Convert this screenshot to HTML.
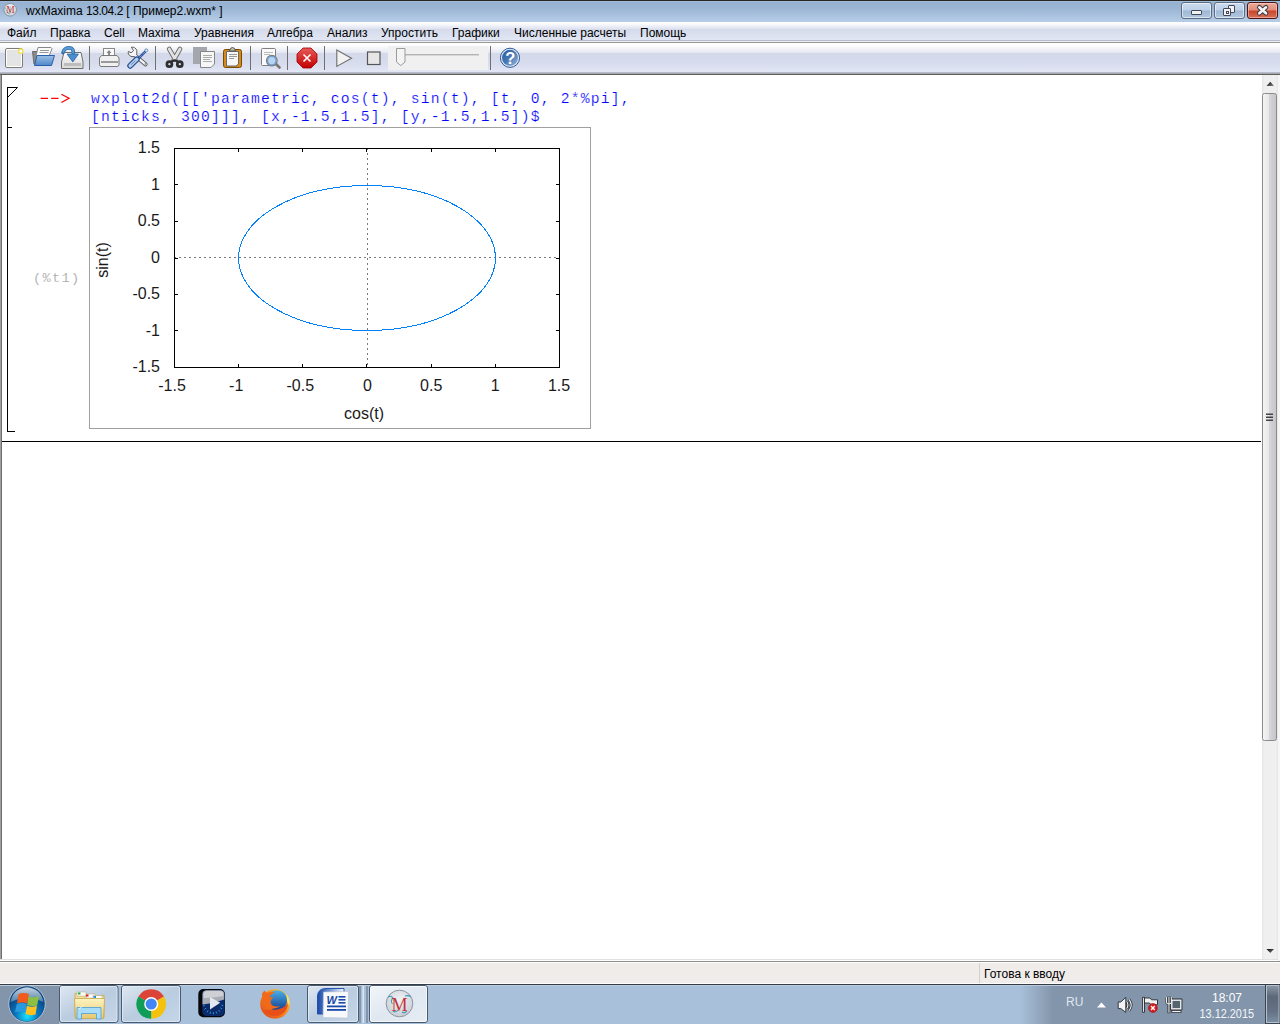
<!DOCTYPE html>
<html><head><meta charset="utf-8">
<style>
*{margin:0;padding:0;box-sizing:border-box}
html,body{width:1280px;height:1024px;overflow:hidden;background:#fff;font-family:"Liberation Sans",sans-serif;position:relative}
.a{position:absolute}
#title{left:0;top:0;width:1280px;height:22px;background:linear-gradient(#2a2624 0,#2a2624 1px,#a0bcd9 1px,#a0bcd9 2px,#97b2d1 2px,#9ab5d3 8px,#b6cde7 22px)}
#ttext{left:26px;top:4px;font-size:12px;color:#000;white-space:nowrap}
#menu{left:0;top:22px;width:1280px;height:21px;background:linear-gradient(#fff 0,#fff 1px,#e0e4f0 6.5px,#d6dbeb 7.5px,#dde3f1 15px,#e2e6f5 18px,#b6bccd 18px,#b6bccd 19px,#eeeeee 19px,#eeeeee 20px,#999 20px)}
.mi{top:26px;font-size:12px;color:#000;white-space:nowrap}
#tool{left:0;top:43px;width:1280px;height:32px;background:linear-gradient(#fdfdfe 0,#fdfdfe 2.5px,#e6e9f4 9.5px,#d4d9ea 10.5px,#d6dbed 19px,#e2e6f5 29px,#b6bccd 29px,#b6bccd 30px,#a8a8a8 30px,#a8a8a8 31px,#5f5f5f 31px)}
.sep{top:46px;width:1px;height:24px;background:#6f6f6f}
#content{left:0;top:75px;width:1280px;height:884px;background:#fff;border-left:1px solid #a0a0a0}
#cl{left:1px;top:75px;width:1px;height:884px;background:#6e6e6e}
#status{left:0;top:959px;width:1280px;height:25px;background:linear-gradient(#e0e0e0 0,#e0e0e0 1px,#fff 1px,#fff 2px,#8c8c8c 2px,#8c8c8c 3px,#fff 3px,#fff 4px,#f0ecea 4px,#f0ecea 24px,#fff 24px)}
#task{left:0;top:984px;width:1280px;height:40px;background:linear-gradient(90deg,#8395ab 0,#8395ab 59px,#a8c0da 59px,#a8c0da 1020px,#8395ab 1053px,#8295aa 1280px);border-top:1px solid #353c46}
.pl{font-family:"Liberation Sans",sans-serif;font-size:16px;fill:#1a1a1a}
.code{font-family:"Liberation Mono",monospace;font-size:14.7px;letter-spacing:1.18px;line-height:18px;color:#0000ff;white-space:pre;-webkit-text-stroke:0.2px #fff}
</style></head><body>
<div id="title" class="a"></div>
<div id="ttext" class="a">wxMaxima <span style="letter-spacing:-0.45px">13.04.2</span> [ Пример2.wxm* ]</div>

<div id="menu" class="a"></div>
<div class="a mi" style="left:7px">Файл</div>
<div class="a mi" style="left:50px">Правка</div>
<div class="a mi" style="left:104px">Cell</div>
<div class="a mi" style="left:138px">Maxima</div>
<div class="a mi" style="left:194px">Уравнения</div>
<div class="a mi" style="left:267px">Алгебра</div>
<div class="a mi" style="left:327px">Анализ</div>
<div class="a mi" style="left:381px">Упростить</div>
<div class="a mi" style="left:452px">Графики</div>
<div class="a mi" style="left:514px">Численные расчеты</div>
<div class="a mi" style="left:640px">Помощь</div>

<div id="tool" class="a"></div>
<svg class="a" style="left:0;top:43px" width="530" height="32">
<defs>
<linearGradient id="gblue" x1="0" y1="0" x2="0" y2="1"><stop offset="0" stop-color="#9cc0e6"/><stop offset="1" stop-color="#4f87c8"/></linearGradient>
<linearGradient id="gred" x1="0" y1="0" x2="0" y2="1"><stop offset="0" stop-color="#e85a5a"/><stop offset="1" stop-color="#c30000"/></linearGradient>
<linearGradient id="ghelp" x1="0" y1="0" x2="1" y2="1"><stop offset="0" stop-color="#2a5aa0"/><stop offset="0.5" stop-color="#4a78b4"/><stop offset="1" stop-color="#9ab8dc"/></linearGradient>
<linearGradient id="gdrive" x1="0" y1="0" x2="0" y2="1"><stop offset="0" stop-color="#ffffff"/><stop offset="1" stop-color="#d8d8d8"/></linearGradient>
</defs>
<g transform="translate(0,-43)">
<!-- new doc -->
<rect x="5.5" y="48.5" width="17" height="19" rx="1.5" fill="#fff" stroke="#7c7c74"/>
<rect x="7" y="50" width="14" height="16" fill="#e4e4e4"/>
<circle cx="20.8" cy="51.2" r="2.2" fill="#fff" stroke="#f0e050" stroke-width="1.4"/>
<!-- open -->
<path d="M32.5 51.5 H37 L37 64 H34 Z" fill="#8a8a8a" stroke="#6a6a6a"/>
<path d="M38 47.5 H51 Q52.5 48 51.5 50 L49 56 H36 Z" fill="#fafafa" stroke="#888"/>
<line x1="40" y1="50.5" x2="49" y2="50.5" stroke="#999"/><line x1="39.5" y1="52.5" x2="48.5" y2="52.5" stroke="#999"/>
<path d="M37 55.5 H54.5 L51.5 65.5 H34.5 Z" fill="url(#gblue)" stroke="#2a5ea8"/>
<!-- save -->
<path d="M64 52.5 H81 L83 62 V68.5 H61.5 V62 Z" fill="url(#gdrive)" stroke="#6e6e6a"/>
<rect x="64" y="63" width="17" height="3" fill="#bdbdbd"/>
<path d="M63 52.5 Q64.5 47.8 69.5 47.8 Q74 48 73.3 54.5" fill="none" stroke="#2a6aa8" stroke-width="3.6" stroke-linecap="round"/>
<path d="M63 52.5 Q64.5 47.8 69.5 47.8 Q74 48 73.3 54.5" fill="none" stroke="#5a9ad6" stroke-width="2"/>
<path d="M67 54 H78.5 L72.8 62 Z" fill="#4a8ccc" stroke="#2a6aa8" stroke-width="0.8" stroke-linejoin="round"/>
<!-- printer -->
<rect x="103.5" y="48.5" width="11" height="9" fill="#fafafa" stroke="#888"/>
<path d="M109 50 L111.5 53 H110 V56 H108 V53 H106.5 Z" fill="#888"/>
<path d="M101.5 55.5 H117 L119 58 V64.5 Q119 66.5 117 66.5 H101 Q99.5 66.5 99.5 64.5 V58 Z" fill="#f0f0f0" stroke="#7a7a7a"/>
<rect x="101" y="61" width="17" height="2" fill="#9a9a9a"/>
<!-- tools -->
<path d="M134.5 55 L145.6 64.4" stroke="#5e5e5e" stroke-width="4" stroke-linecap="round"/>
<path d="M134.5 55 L145.6 64.4" stroke="#f6f6f6" stroke-width="2.2" stroke-linecap="round"/>
<path d="M131.3 47.2 Q135.5 46.8 136.8 50.5 Q137.3 53.5 135.8 55.5 L134.6 56.6 Q130.5 57.5 128.6 54.5 Q127.8 52.8 128.4 51.5 L131.2 52.8 L133.6 50.6 Z" fill="#f6f6f6" stroke="#5e5e5e" stroke-width="1"/>
<path d="M134 54 L136.5 56.5" stroke="#f6f6f6" stroke-width="2"/>
<circle cx="145.2" cy="64" r="0.7" fill="#555"/>
<path d="M138.5 58.3 L146.2 50.6" stroke="#1f4f9f" stroke-width="2.4" stroke-linecap="round"/>
<path d="M138.5 58.3 L146 50.8" stroke="#e8f0f8" stroke-width="0.8" stroke-dasharray="1,1"/>
<circle cx="146.3" cy="50.4" r="1.5" fill="#f0e8d8" stroke="#5a8ac8" stroke-width="0.9"/>
<path d="M130.2 65.8 L136.8 59.3" stroke="#1a4896" stroke-width="5.8" stroke-linecap="round"/>
<path d="M130.2 65.8 L136.8 59.3" stroke="#b4cde6" stroke-width="3.6" stroke-linecap="round"/>
<path d="M131.2 64.6 L135.3 60.6" stroke="#6a88aa" stroke-width="1"/>
<!-- scissors -->
<path d="M169.2 49 L175.3 59.5 M180 49 L173.9 59.5" stroke="#6a6a6a" stroke-width="4.6" stroke-linecap="round"/>
<path d="M169.2 49 L175.3 59.5 M180 49 L173.9 59.5" stroke="#e2e2e2" stroke-width="2.8" stroke-linecap="round"/>
<path d="M171.5 61.6 Q174.6 59.2 177.7 61.6" stroke="#2e2e2e" stroke-width="2.2" fill="none"/>
<circle cx="169.4" cy="64.2" r="2.5" fill="none" stroke="#2e2e2e" stroke-width="2.7"/>
<circle cx="179.8" cy="64.2" r="2.5" fill="none" stroke="#2e2e2e" stroke-width="2.7"/>
<!-- copy -->
<rect x="193" y="47" width="14" height="17" fill="#a4a7ae"/>
<path d="M200.5 51.5 H214.5 V64 L211 67.5 H200.5 Z" fill="#f6f6f6" stroke="#858585"/>
<line x1="203" y1="55.5" x2="212" y2="55.5" stroke="#aaa"/><line x1="203" y1="57.5" x2="212" y2="57.5" stroke="#aaa"/><line x1="203" y1="59.5" x2="210" y2="59.5" stroke="#aaa"/><line x1="203" y1="61.5" x2="212" y2="61.5" stroke="#aaa"/>
<!-- paste -->
<rect x="223.5" y="49.5" width="18" height="18" rx="2" fill="#d68a1c" stroke="#7a4a00"/>
<path d="M226.5 51.5 H238.5 V64 L236 66 H226.5 Z" fill="#f6f6f6" stroke="#6a6a6a"/>
<path d="M229.5 51 Q230 47.5 232.5 47.5 Q235 47.5 235.5 51 Z" fill="#bdbdb0" stroke="#555"/>
<line x1="229" y1="54.5" x2="237" y2="54.5" stroke="#999"/><line x1="229" y1="56.5" x2="237" y2="56.5" stroke="#999"/><line x1="229" y1="58.5" x2="234" y2="58.5" stroke="#999"/>
<!-- preview -->
<rect x="261.5" y="48.5" width="14" height="17" rx="1" fill="#fafafa" stroke="#7e7e7e"/>
<line x1="264" y1="52.5" x2="273" y2="52.5" stroke="#bbb"/><line x1="264" y1="54.5" x2="270" y2="54.5" stroke="#bbb"/>
<line x1="275" y1="63" x2="279.5" y2="67.5" stroke="#777" stroke-width="2.6" stroke-linecap="round"/>
<circle cx="271.8" cy="60.6" r="5.3" fill="#b8d4f0" stroke="#777" stroke-width="1.2"/>
<circle cx="271.8" cy="60.6" r="4.2" fill="none" stroke="#6aa0d8" stroke-width="1.2"/>
<!-- stop -->
<path d="M303 48 H311 L317 54 V62 L311 68 H303 L297 62 V54 Z" fill="url(#gred)" stroke="#a00000" stroke-width="0.8"/>
<path d="M303.5 54.5 L310.5 61.5 M310.5 54.5 L303.5 61.5" stroke="#fff" stroke-width="1.6"/>
<!-- play -->
<path d="M336.8 50 L351.5 58.2 L336.8 66.4 Z" fill="#f2f2f2" stroke="#6e6e6e" stroke-width="1.1"/>
<!-- stop square -->
<rect x="367.5" y="52" width="12.5" height="12.5" fill="#e6e6e6" stroke="#555" stroke-width="1.2"/>
<!-- slider -->
<rect x="388" y="46" width="100" height="24" fill="#f0f0f0"/>
<rect x="404" y="54" width="75" height="2" fill="#d6d6d6"/>
<line x1="404" y1="54.5" x2="479" y2="54.5" stroke="#b4b4b4"/>
<path d="M396.5 48.5 H405 V62 L400.75 65.5 L396.5 62 Z" fill="#f4f4f4" stroke="#9a9a9a"/>
<!-- help -->
<circle cx="510" cy="57.8" r="9.6" fill="#dfe6f0" stroke="#2f5c9e" stroke-width="1"/>
<circle cx="510" cy="57.8" r="8" fill="url(#ghelp)"/>
<text x="510.2" y="63.8" text-anchor="middle" font-family="Liberation Sans" font-weight="bold" font-size="16.5" fill="#fff">?</text>
</g>
</svg>

<div class="a sep" style="left:89px"></div>
<div class="a sep" style="left:155px"></div>
<div class="a sep" style="left:250px"></div>
<div class="a sep" style="left:287px"></div>
<div class="a sep" style="left:324px"></div>
<div class="a sep" style="left:490px"></div>

<div id="content" class="a"></div><div id="cl" class="a"></div>

<div class="a" style="left:7px;top:87px;width:1px;height:345px;background:#000"></div>
<svg class="a" style="left:0;top:80px" width="30" height="60"><path d="M7.5 7.5 H17.5 L8 17" fill="none" stroke="#000" stroke-width="1"/><line x1="8" y1="47.5" x2="12" y2="47.5" stroke="#000"/></svg>
<div class="a" style="left:7px;top:431px;width:8px;height:1px;background:#000"></div>
<svg class="a" style="left:38px;top:90px" width="36" height="16"><path d="M2.6 8.3 H10 M13.2 8.3 H20.5" stroke="#ff0000" stroke-width="1.3"/><path d="M23.4 4.2 L31 8.3 L23.4 12.5" fill="none" stroke="#ff0000" stroke-width="1.3"/></svg>
<div class="a code" style="left:91px;top:90px">wxplot2d([['parametric, cos(t), sin(t), [t, 0, 2*%pi],</div>
<div class="a code" style="left:91px;top:108px">[nticks, 300]]], [x,-1.5,1.5], [y,-1.5,1.5])$</div>
<div class="a code" style="left:33px;top:270px;color:#a0a0a0;font-size:13.7px;letter-spacing:1.3px">(%t1)</div>
<svg class="a" style="left:0;top:0" width="1280" height="1024">
<rect x="89.5" y="127.5" width="501" height="301" fill="#fff" stroke="#a0a0a0" stroke-width="1"/>
<line x1="175" y1="257.5" x2="559" y2="257.5" stroke="#7a7a7a" stroke-width="1" stroke-dasharray="2,3" stroke-dashoffset="1"/>
<line x1="367.5" y1="149" x2="367.5" y2="367" stroke="#7a7a7a" stroke-width="1" stroke-dasharray="2,3" stroke-dashoffset="1"/>
<rect x="174.5" y="148.5" width="385" height="219" fill="none" stroke="#000" stroke-width="1"/>
<line x1="238.5" y1="149" x2="238.5" y2="152" stroke="#000"/>
<line x1="238.5" y1="367" x2="238.5" y2="364" stroke="#000"/>
<line x1="175" y1="330.5" x2="178" y2="330.5" stroke="#000"/>
<line x1="559" y1="330.5" x2="556" y2="330.5" stroke="#000"/>
<line x1="302.5" y1="149" x2="302.5" y2="152" stroke="#000"/>
<line x1="302.5" y1="367" x2="302.5" y2="364" stroke="#000"/>
<line x1="175" y1="294.5" x2="178" y2="294.5" stroke="#000"/>
<line x1="559" y1="294.5" x2="556" y2="294.5" stroke="#000"/>
<line x1="366.5" y1="149" x2="366.5" y2="152" stroke="#000"/>
<line x1="366.5" y1="367" x2="366.5" y2="364" stroke="#000"/>
<line x1="175" y1="258.5" x2="178" y2="258.5" stroke="#000"/>
<line x1="559" y1="258.5" x2="556" y2="258.5" stroke="#000"/>
<line x1="431.5" y1="149" x2="431.5" y2="152" stroke="#000"/>
<line x1="431.5" y1="367" x2="431.5" y2="364" stroke="#000"/>
<line x1="175" y1="221.5" x2="178" y2="221.5" stroke="#000"/>
<line x1="559" y1="221.5" x2="556" y2="221.5" stroke="#000"/>
<line x1="495.5" y1="149" x2="495.5" y2="152" stroke="#000"/>
<line x1="495.5" y1="367" x2="495.5" y2="364" stroke="#000"/>
<line x1="175" y1="184.5" x2="178" y2="184.5" stroke="#000"/>
<line x1="559" y1="184.5" x2="556" y2="184.5" stroke="#000"/>
<text x="160" y="372.30" text-anchor="end" class="pl">-1.5</text>
<text x="172" y="391" text-anchor="middle" class="pl">-1.5</text>
<text x="160" y="335.80" text-anchor="end" class="pl">-1</text>
<text x="236.2" y="391" text-anchor="middle" class="pl">-1</text>
<text x="160" y="299.30" text-anchor="end" class="pl">-0.5</text>
<text x="300.3" y="391" text-anchor="middle" class="pl">-0.5</text>
<text x="160" y="262.80" text-anchor="end" class="pl">0</text>
<text x="367.5" y="391" text-anchor="middle" class="pl">0</text>
<text x="160" y="226.30" text-anchor="end" class="pl">0.5</text>
<text x="431.2" y="391" text-anchor="middle" class="pl">0.5</text>
<text x="160" y="189.80" text-anchor="end" class="pl">1</text>
<text x="495.3" y="391" text-anchor="middle" class="pl">1</text>
<text x="160" y="153.30" text-anchor="end" class="pl">1.5</text>
<text x="559.0" y="391" text-anchor="middle" class="pl">1.5</text>
<text x="364" y="419" text-anchor="middle" class="pl">cos(t)</text>
<text transform="translate(108,260) rotate(-90)" text-anchor="middle" class="pl">sin(t)</text>
<ellipse cx="367" cy="258" rx="128.5" ry="72.5" fill="none" stroke="#0080ff" stroke-width="1" shape-rendering="crispEdges"/>
</svg>
<div class="a" style="left:2px;top:441px;width:1259px;height:1px;background:#000"></div>
<div id="status" class="a"></div>
<div id="task" class="a"></div>
<!-- app icon -->
<svg class="a" style="left:2px;top:2px" width="18" height="18"><defs><radialGradient id="gapp" cx="0.5" cy="0.3" r="0.7"><stop offset="0" stop-color="#f4f6f8"/><stop offset="1" stop-color="#c8d0d8"/></radialGradient></defs><circle cx="8.2" cy="7.8" r="6.3" fill="url(#gapp)" stroke="#8a949e" stroke-width="1"/><path d="M3.5 5.5 Q4 10 7 12 M8 4 Q9 8 7.5 12" stroke="#5aa0c0" stroke-width="0.8" fill="none" opacity="0.8"/><text x="8.4" y="10.9" text-anchor="middle" font-family="Liberation Serif" font-size="9.5" fill="#c43a3a">M</text></svg>
<!-- title buttons -->
<div class="a" style="left:1181px;top:2px;width:31px;height:17px;border:1px solid #5b6b82;border-radius:3px;background:linear-gradient(#cadbee 0,#bcd0e8 7px,#9fb8d4 8px,#b2c8e0 100%);box-shadow:inset 0 0 0 1px rgba(255,255,255,0.55)"></div>
<div class="a" style="left:1191px;top:10px;width:11px;height:5px;border:1px solid #40485a;border-radius:1px;background:#f2f2f2"></div>
<div class="a" style="left:1214px;top:2px;width:31px;height:17px;border:1px solid #5b6b82;border-radius:3px;background:linear-gradient(#cadbee 0,#bcd0e8 7px,#9fb8d4 8px,#b2c8e0 100%);box-shadow:inset 0 0 0 1px rgba(255,255,255,0.55)"></div>
<div class="a" style="left:1228px;top:5px;width:7px;height:8px;border:1.5px solid #40485a;border-radius:1px;background:#f2f2f2"></div>
<div class="a" style="left:1223px;top:8px;width:8px;height:8px;border:1.5px solid #40485a;border-radius:1px;background:#f2f2f2"></div>
<div class="a" style="left:1225.5px;top:10.5px;width:3px;height:3px;border:1px solid #40485a"></div>
<div class="a" style="left:1247px;top:2px;width:31px;height:17px;border:1px solid #4a1418;border-radius:3px;background:linear-gradient(#eeaa9a 0,#e08c78 7px,#c8452c 8px,#d87058 100%);box-shadow:inset 0 0 0 1px rgba(255,220,210,0.5)"></div>
<svg class="a" style="left:1255px;top:4px" width="16" height="13"><path d="M4.3 3.3 L11 9.3 M11 3.3 L4.3 9.3" stroke="#3a3a48" stroke-width="4.6" stroke-linecap="round"/><path d="M4.3 3.3 L11 9.3 M11 3.3 L4.3 9.3" stroke="#f4f4f4" stroke-width="2.6" stroke-linecap="round"/></svg>

<!-- scrollbar -->
<div class="a" style="left:1262px;top:75px;width:16px;height:884px;background:linear-gradient(90deg,#e4e4e4 0,#efefef 2px,#f0f0f0 14px,#e6e6e6 16px)"></div>
<div class="a" style="left:1278px;top:75px;width:2px;height:886px;background:#f6f6f6"></div>
<svg class="a" style="left:1262px;top:75px" width="16" height="884"><defs><linearGradient id="gth" x1="0" y1="0" x2="1" y2="0"><stop offset="0" stop-color="#f6f6f6"/><stop offset="0.45" stop-color="#e8e8e8"/><stop offset="0.5" stop-color="#d6d6da"/><stop offset="1" stop-color="#c4c4c8"/></linearGradient><linearGradient id="garr" x1="0" y1="0" x2="1" y2="1"><stop offset="0" stop-color="#000"/><stop offset="1" stop-color="#888"/></linearGradient></defs>
<path d="M4.5 11 L8.3 6.8 L12 11 Z" fill="url(#garr)"/>
<rect x="0.5" y="18.5" width="14" height="647" rx="2" fill="url(#gth)" stroke="#8c8c8c"/>
<rect x="4" y="338.5" width="7" height="1.5" fill="#444"/><rect x="4" y="341.5" width="7" height="1.5" fill="#444"/><rect x="4" y="344.5" width="7" height="1.5" fill="#444"/>
<path d="M4.5 874 L12 874 L8.3 878 Z" fill="url(#garr)"/>
</svg>

<!-- status -->
<div class="a" style="left:979px;top:963px;width:1px;height:20px;background:#d4d0cc"></div>
<div class="a" style="left:984px;top:967px;font-size:12px;color:#000;white-space:nowrap">Готова к вводу</div>

<!-- taskbar -->
<div class="a" style="left:0;top:985px;width:1280px;height:1px;background:#bccbdc"></div>
<svg class="a" style="left:0;top:984px" width="1280" height="40">
<defs>
<radialGradient id="orb" cx="0.5" cy="0.85" r="0.7"><stop offset="0" stop-color="#18e4ff"/><stop offset="0.45" stop-color="#0a78c0"/><stop offset="1" stop-color="#0a3d78"/></radialGradient>
<linearGradient id="orbtop" x1="0" y1="0" x2="0" y2="1"><stop offset="0" stop-color="#e8f0f6"/><stop offset="1" stop-color="#5a88b0"/></linearGradient>
<linearGradient id="btn" x1="0" y1="0" x2="1" y2="1"><stop offset="0" stop-color="#dfe8f2"/><stop offset="0.5" stop-color="#b9cce0"/><stop offset="1" stop-color="#c6d6e8"/></linearGradient>
<linearGradient id="fold" x1="0" y1="0" x2="0" y2="1"><stop offset="0" stop-color="#fdf3c0"/><stop offset="1" stop-color="#e8c870"/></linearGradient>
<linearGradient id="wmp" x1="0" y1="0" x2="0" y2="1"><stop offset="0" stop-color="#2a3440"/><stop offset="1" stop-color="#05080c"/></linearGradient>
<radialGradient id="ff" cx="0.6" cy="0.35" r="0.6"><stop offset="0" stop-color="#4a78c8"/><stop offset="1" stop-color="#173a8a"/></radialGradient>
<linearGradient id="ffo" x1="0" y1="0" x2="0" y2="1"><stop offset="0" stop-color="#ffb000"/><stop offset="1" stop-color="#e04010"/></linearGradient>
<linearGradient id="sd" x1="0" y1="0" x2="1" y2="1"><stop offset="0" stop-color="#9aa6b4"/><stop offset="0.5" stop-color="#5e6c7e"/><stop offset="1" stop-color="#6e7c8e"/></linearGradient>
</defs>
<!-- start orb -->
<circle cx="27" cy="20" r="18.2" fill="#0a4a8a" stroke="#c8d4e0" stroke-width="0.8"/>
<circle cx="27" cy="20" r="17.3" fill="url(#orb)"/>
<path d="M10.5 18 Q13 4.5 27 3.2 Q41 4.5 43.5 18 Q35 14 27 15 Q19 14 10.5 18 Z" fill="url(#orbtop)" opacity="0.85"/>
<path d="M18.5 10 Q23.5 8 29 10 L27.3 19.5 Q22.5 17.5 17 19.2 Z" fill="#f05a1c"/>
<path d="M28.5 12.5 Q33.5 14.5 39 12 L37.2 21.2 Q32 23 27.2 21 Z" fill="#8cc040"/>
<path d="M16.8 20 Q21.5 18 26.8 20 L25.3 28.5 Q20.5 26.5 15 28.2 Z" fill="#2a9ae0"/>
<path d="M27 21.8 Q32 23.8 37 21.5 L35.5 30.5 Q30.5 32 25.5 30 Z" fill="#ffc020"/>
<!-- button 1 explorer -->
<rect x="59.5" y="1.5" width="58.5" height="37" rx="2.5" fill="url(#btn)" stroke="#4a5a6e" stroke-width="1"/>
<rect x="60.5" y="2.5" width="56.5" height="35" rx="2" fill="none" stroke="#e8f0f8" stroke-opacity="0.7"/>
<path d="M75 9.5 H85 L87 11.5 H104 V33.5 H75 Z" fill="#f0dc98" stroke="#c8a850" stroke-width="0.8"/>
<rect x="77" y="8" width="9" height="4" fill="#fff" stroke="#b8a070" stroke-width="0.5"/><rect x="86" y="10" width="9" height="4" fill="#fff" stroke="#b8a070" stroke-width="0.5"/><rect x="93" y="11.5" width="9" height="4" fill="#fff" stroke="#b8a070" stroke-width="0.5"/>
<rect x="78" y="8.5" width="2.5" height="2" fill="#20b040"/><rect x="86" y="10.5" width="2.5" height="2" fill="#d02020"/><rect x="93.5" y="12" width="2.5" height="2" fill="#2090e0"/>
<path d="M74.5 14.5 H104.5 L103.5 34.5 H75.5 Z" fill="url(#fold)" stroke="#c8a850" stroke-width="0.8"/>
<path d="M77 23.5 H101 V35 H96.5 V29.5 H81.5 V35 H77 Z" fill="#a8dcf8" stroke="#4aa0d8" stroke-width="0.8"/>
<path d="M79 25 L84 21" stroke="#fff" stroke-width="1" opacity="0.8"/>
<!-- button 2 chrome -->
<rect x="121.5" y="1.5" width="59" height="37" rx="2.5" fill="url(#btn)" stroke="#4a5a6e" stroke-width="1"/>
<rect x="122.5" y="2.5" width="57" height="35" rx="2" fill="none" stroke="#e8f0f8" stroke-opacity="0.7"/>
<path d="M151.2 20 L138.38 12.60 A14.8 14.8 0 0 1 164.02 12.60 Z" fill="#db4437"/><path d="M151.2 20 L164.02 12.60 A14.8 14.8 0 0 1 151.20 34.80 Z" fill="#f4c20d"/><path d="M151.2 20 L151.20 34.80 A14.8 14.8 0 0 1 138.38 12.60 Z" fill="#0f9d58"/><circle cx="151.2" cy="20" r="7" fill="#fff"/><circle cx="151.2" cy="20" r="5.6" fill="#4285f4"/>
<!-- media center -->
<rect x="198.3" y="5.1" width="26.6" height="28.2" rx="5" fill="#05070a"/>
<rect x="202.2" y="6" width="22.3" height="26" rx="4.5" fill="#0a2a6a"/>
<path d="M202.5 10 Q202.5 6.2 207 6.2 H220 Q224.2 6.2 224.2 10 V15.5 Q214 19.5 202.5 20.5 Z" fill="#a8acb4"/>
<path d="M203.5 10 Q204 7 207.5 7 H219.5 Q223 7 223.2 10 V12 Q213 14 203.5 14 Z" fill="#d8dadf" opacity="0.8"/>
<g stroke="#2aa8e8" stroke-width="1" opacity="0.9">
<path d="M205 21 L203.3 22" /><path d="M206 24 L204.5 25.5"/><path d="M208 26.5 L207 28.3"/><path d="M210.5 27.8 L210.2 29.8"/><path d="M213.3 28.2 L213.5 30.2"/><path d="M216 27.6 L216.8 29.5"/><path d="M218.5 26 L219.8 27.6"/><path d="M220.3 23.8 L222 25"/><path d="M221.5 21 L223.3 21.8"/>
</g>
<path d="M210 13 L220.2 18.8 L210 25.4 Z" fill="#e4e8f0"/>
<!-- firefox -->
<defs><linearGradient id="ffb" x1="0" y1="0" x2="0" y2="1"><stop offset="0" stop-color="#48b0e8"/><stop offset="1" stop-color="#173c8c"/></linearGradient>
<linearGradient id="ffor" x1="1" y1="0" x2="0" y2="1"><stop offset="0" stop-color="#ffe030"/><stop offset="0.35" stop-color="#ff9a1a"/><stop offset="1" stop-color="#e0401a"/></linearGradient></defs>
<circle cx="275" cy="20" r="14.8" fill="url(#ffor)"/>
<circle cx="277" cy="16.5" r="10.2" fill="url(#ffb)"/>
<path d="M262 9.5 L264.5 6.5 Q266 9 267.5 9 Q271 7 275 8.2 Q270.5 10 269.5 13.5 Q271 12.5 273.5 13.2 Q270 15.5 270.8 19.5 Q273 23.5 280.5 22 Q276 25 271.5 25 Q265 24 262.5 18 Z" fill="#f06a1a"/>
<path d="M270.5 25.5 Q280 27 288 20 Q287 29 278 32 Q268 33 263 26 Q266 26 270.5 25.5 Z" fill="#e8501a"/>
<path d="M286.5 10 Q290.5 16 289.5 22 Q288 19 287 17 Z" fill="#ffe868" opacity="0.9"/>
<!-- word button -->
<rect x="307.5" y="1.5" width="51" height="37" rx="2.5" fill="url(#btn)" stroke="#4a5a6e" stroke-width="1"/>
<rect x="308.5" y="2.5" width="49" height="35" rx="2" fill="none" stroke="#e8f0f8" stroke-opacity="0.7"/>
<defs><linearGradient id="wbk" x1="0" y1="0" x2="1" y2="0"><stop offset="0" stop-color="#1a48a8"/><stop offset="0.5" stop-color="#7a9ad8"/><stop offset="1" stop-color="#f4f6fa"/></linearGradient></defs>
<path d="M317.5 12 Q318 4.5 326 4.5 H344 V30 H317.5 Z" fill="url(#wbk)" stroke="#1a48a8" stroke-width="0.9"/>
<path d="M323.5 8 L348.5 7.5 L347.8 34 L323 33.5 Z" fill="#f8f9fb" stroke="#b8c4d4" stroke-width="0.6"/>
<text x="326.5" y="19.5" font-family="Liberation Sans" font-style="italic" font-weight="bold" font-size="11" fill="#1a48a8">W</text>
<rect x="338.5" y="12" width="7" height="1.6" fill="#1a48a8"/><rect x="338.5" y="15" width="7" height="1.6" fill="#1a48a8"/><rect x="338.5" y="18" width="7" height="1.6" fill="#1a48a8"/>
<rect x="327" y="21.5" width="19" height="1.8" fill="#1a48a8"/><rect x="327" y="25" width="19" height="1.8" fill="#1a48a8"/>
<rect x="359.5" y="2" width="1" height="37" fill="#5a6a7e"/><rect x="362.5" y="2" width="1.5" height="37" fill="#dce6f0"/><rect x="366.5" y="2" width="1" height="37" fill="#5a6a7e"/>
<!-- maxima button -->
<defs><linearGradient id="mxb" x1="0" y1="0" x2="1" y2="1"><stop offset="0" stop-color="#f2f6fa"/><stop offset="0.5" stop-color="#dfe7f0"/><stop offset="1" stop-color="#e6edf5"/></linearGradient>
<radialGradient id="mxc" cx="0.5" cy="0.35" r="0.7"><stop offset="0" stop-color="#f0f2f4"/><stop offset="1" stop-color="#c4ccd4"/></radialGradient></defs>
<rect x="369.5" y="1.5" width="58" height="37" rx="2.5" fill="url(#mxb)" stroke="#4a5a6e" stroke-width="1"/>
<rect x="370.5" y="2.5" width="56" height="35" rx="2" fill="none" stroke="#fafcfe" stroke-opacity="0.8"/>
<circle cx="399.5" cy="19.5" r="13.3" fill="url(#mxc)" stroke="#8c949c" stroke-width="1"/>
<path d="M388 13 Q391 11 393 14 Q390 17 392.5 20 M405 12 Q409 11 411 13 M393 27 Q396 29 398 26 M402 28 Q404 30 407 27" stroke="#4a98b8" stroke-width="1.1" fill="none"/>
<text x="399.5" y="27" text-anchor="middle" font-family="Liberation Serif" font-size="18" fill="#c43434">M</text>
<!-- tray -->
<text x="1066" y="22" font-family="Liberation Sans" font-size="12" fill="#dfe6ee">RU</text>
<path d="M1097 23.5 L1101.5 18.5 L1106 23.5 Z" fill="#fff"/>
<g stroke="#262a30" stroke-width="0.9" stroke-linejoin="round">
<path d="M1118.2 18 H1120.8 L1125.8 13.4 V28.4 L1120.8 24.6 H1118.2 Z" fill="#f4f4f4"/>
<path d="M1126.8 17.5 Q1129 21 1126.8 24.5" fill="none" stroke="#262a30" stroke-width="2.6"/>
<path d="M1126.8 17.5 Q1129 21 1126.8 24.5" fill="none" stroke="#f4f4f4" stroke-width="1.1"/>
<path d="M1129 15.3 Q1133.5 21 1129 26.7" fill="none" stroke="#262a30" stroke-width="2.6"/>
<path d="M1129 15.3 Q1133.5 21 1129 26.7" fill="none" stroke="#f4f4f4" stroke-width="1.1"/>
<rect x="1142.6" y="13.3" width="1.9" height="15" fill="#f4f4f4"/>
<path d="M1144.5 14 H1150 L1151.5 15.8 H1157.5 V20.8 H1151 L1149.5 19 H1144.5 Z" fill="#f0f0f0"/>
</g>
<circle cx="1152.9" cy="24" r="4.4" fill="#e01818" stroke="#8a1010" stroke-width="0.6"/>
<path d="M1151 22.1 L1154.8 25.9 M1154.8 22.1 L1151 25.9" stroke="#fff" stroke-width="1.4"/>
<rect x="1165.6" y="12.8" width="6.8" height="7.8" rx="1.5" fill="#262a30"/>
<rect x="1167.5" y="19" width="2.8" height="10.2" fill="#262a30"/>
<rect x="1170.2" y="14.6" width="12.2" height="11.8" rx="0.8" fill="#262a30"/>
<rect x="1171.1" y="15.5" width="10.4" height="10" fill="#f2f2f2"/>
<rect x="1172.5" y="16.9" width="7.6" height="7.2" fill="#56646f"/>
<rect x="1171.4" y="26.2" width="10" height="2.6" fill="#262a30"/>
<rect x="1172.2" y="26.9" width="8.4" height="1.2" fill="#f2f2f2"/>
<path d="M1166.6 13 V18.5 Q1166.6 19.7 1167.8 19.7 H1170 Q1171.3 19.7 1171.3 18.5 V13 M1168.95 13 V28.8" fill="none" stroke="#f2f2f2" stroke-width="1.1"/>
<text x="1227" y="17.5" text-anchor="middle" font-family="Liberation Sans" font-size="12" fill="#fff">18:07</text>
<text x="1199.5" y="34" font-family="Liberation Sans" font-size="12" textLength="54.5" lengthAdjust="spacingAndGlyphs" fill="#f4f8fc">13.12.2015</text>
<defs><linearGradient id="sd2" x1="0" y1="0" x2="0" y2="1"><stop offset="0" stop-color="#8c98a6"/><stop offset="0.3" stop-color="#5c6878"/><stop offset="0.7" stop-color="#647284"/><stop offset="1" stop-color="#7c8ea4"/></linearGradient></defs>
<rect x="1265" y="1" width="15" height="39" fill="#3c4652"/>
<rect x="1266.5" y="1.5" width="12.5" height="37" fill="url(#sd2)" stroke="#b4c0cc" stroke-width="1"/>
</svg>

</body></html>
